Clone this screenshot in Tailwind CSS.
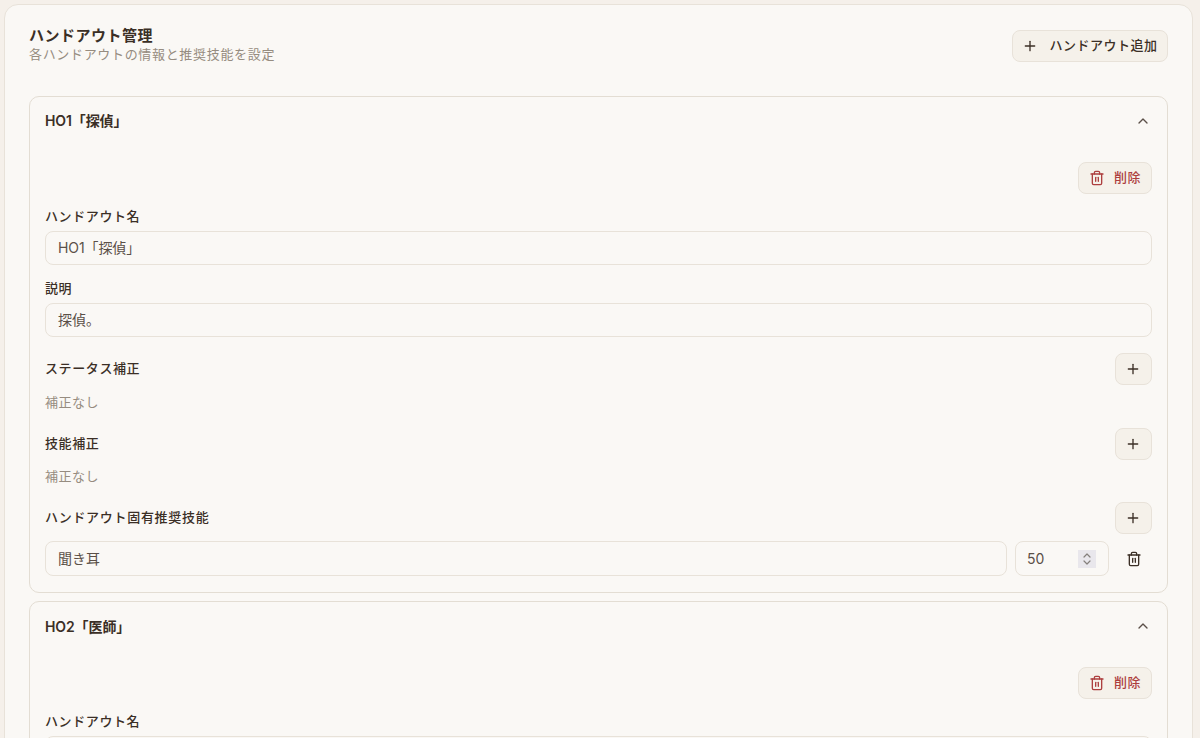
<!DOCTYPE html>
<html lang="ja">
<head>
    <meta charset="UTF-8">
    <meta name="viewport" content="width=device-width, initial-scale=1.0">
    <title>ハンドアウト管理</title>
    <script src="https://cdn.jsdelivr.net/npm/@tailwindcss/browser@4"></script>
</head>
<body class="bg-[#f5f0ea] h-[738px] overflow-hidden font-['Inter','Noto_Sans_CJK_JP',sans-serif] text-[#3b2f26]">
    <div class="ml-[4px] mr-[7px] mt-[4px] bg-[#faf8f5] border border-[#e8e2d9] rounded-[14px] px-6 pt-[25px]">
        <!-- ヘッダー -->
        <div class="flex items-start justify-between mb-[32px]">
            <div class="-mt-[2px]">
                <h2 class="text-[15px] leading-[16px] font-semibold tracking-[0.5px]">ハンドアウト管理</h2>
                <p class="text-[13px] leading-[20px] text-[#968c80] tracking-[0.67px]">各ハンドアウトの情報と推奨技能を設定</p>
            </div>
            <button class="flex items-center justify-center gap-[11px] w-[156px] h-8 bg-[#f5f1ea] border border-[#e8e2d9] rounded-lg text-[13px] tracking-[0.5px] font-medium">
                <svg class="w-4 h-4" viewBox="0 0 24 24" fill="none" stroke="currentColor" stroke-width="2" stroke-linecap="round" stroke-linejoin="round"><path d="M5 12h14"/><path d="M12 5v14"/></svg>
                ハンドアウト追加
            </button>
        </div>

        <!-- HO1 -->
        <section class="bg-[#faf8f5] border border-[#e3ddd3] rounded-[10px] px-[15px] pb-4 mb-2">
            <div class="flex items-center justify-between h-[50px]">
                <h3 class="text-sm font-semibold -mt-[2px] tracking-[-0.1px]">HO1「探偵」</h3>
                <svg class="w-4 h-4 -mt-[2px] mr-[1px] text-[#5b5048]" viewBox="0 0 24 24" fill="none" stroke="currentColor" stroke-width="2" stroke-linecap="round" stroke-linejoin="round"><path d="m18 15-6-6-6 6"/></svg>
            </div>
            <div class="flex justify-end mt-[15px]">
                <button class="flex items-center justify-center gap-[9px] w-[74px] h-8 bg-[#f5f1ea] border border-[#e8e2d9] rounded-lg text-[13px] tracking-[0.5px] font-medium text-[#ad3f3f]">
                    <svg class="w-4 h-4" viewBox="0 0 24 24" fill="none" stroke="currentColor" stroke-width="2" stroke-linecap="round" stroke-linejoin="round"><path d="M3 6h18"/><path d="M19 6v14a2 2 0 0 1-2 2H7a2 2 0 0 1-2-2V6"/><path d="M8 6V4a2 2 0 0 1 2-2h4a2 2 0 0 1 2 2v2"/><path d="M10 11v6"/><path d="M14 11v6"/></svg>
                    削除
                </button>
            </div>
            <label class="block text-[13px] leading-[20px] tracking-[0.6px] font-medium mt-3">ハンドアウト名</label>
            <div class="mt-[5px] h-[34px] flex items-center px-3 border border-[#e8e2d9] rounded-lg text-sm tracking-[-0.1px] text-[#5b5048]">HO1「探偵」</div>
            <label class="block text-[13px] leading-[20px] tracking-[0.6px] font-medium mt-[13px]">説明</label>
            <div class="mt-[5px] h-[34px] flex items-center px-3 border border-[#e8e2d9] rounded-lg text-sm text-[#5b5048]">探偵。</div>

            <div class="flex items-center justify-between mt-4">
                <span class="text-[13px] tracking-[0.6px] font-medium">ステータス補正</span>
                <button class="flex items-center justify-center w-[37px] h-8 pr-[1px] bg-[#f5f1ea] border border-[#e8e2d9] rounded-lg">
                    <svg class="w-4 h-4" viewBox="0 0 24 24" fill="none" stroke="currentColor" stroke-width="2" stroke-linecap="round" stroke-linejoin="round"><path d="M5 12h14"/><path d="M12 5v14"/></svg>
                </button>
            </div>
            <p class="mt-[7px] text-[13px] leading-[20px] tracking-[0.5px] text-[#968c80]">補正なし</p>

            <div class="flex items-center justify-between mt-4">
                <span class="text-[13px] tracking-[0.6px] font-medium -mt-[1px]">技能補正</span>
                <button class="flex items-center justify-center w-[37px] h-8 pr-[1px] bg-[#f5f1ea] border border-[#e8e2d9] rounded-lg">
                    <svg class="w-4 h-4" viewBox="0 0 24 24" fill="none" stroke="currentColor" stroke-width="2" stroke-linecap="round" stroke-linejoin="round"><path d="M5 12h14"/><path d="M12 5v14"/></svg>
                </button>
            </div>
            <p class="mt-[6px] text-[13px] leading-[20px] tracking-[0.5px] text-[#968c80]">補正なし</p>

            <div class="flex items-center justify-between mt-4">
                <span class="text-[13px] tracking-[0.7px] font-medium">ハンドアウト固有推奨技能</span>
                <button class="flex items-center justify-center w-[37px] h-8 pr-[1px] bg-[#f5f1ea] border border-[#e8e2d9] rounded-lg">
                    <svg class="w-4 h-4" viewBox="0 0 24 24" fill="none" stroke="currentColor" stroke-width="2" stroke-linecap="round" stroke-linejoin="round"><path d="M5 12h14"/><path d="M12 5v14"/></svg>
                </button>
            </div>
            <div class="flex items-center gap-2 mt-[7px]">
                <div class="flex-1 h-[35px] flex items-center px-3 border border-[#e8e2d9] rounded-lg text-sm text-[#5b5048]">聞き耳</div>
                <div class="w-[94px] h-[35px] flex items-center justify-between pl-[11px] pr-[12px] border border-[#e8e2d9] rounded-lg text-sm text-[#5b5048]">
                    50
                    <span class="flex items-center justify-center w-[18px] h-[18px] bg-[#e9e7ec] text-[#85807c]">
                        <svg class="w-[12px] h-[16px]" viewBox="0 0 12 16" fill="none" stroke="currentColor" stroke-width="1.2" stroke-linecap="round" stroke-linejoin="round"><path d="M3 6l3-3 3 3"/><path d="M3 10l3 3 3-3"/></svg>
                    </span>
                </div>
                <button class="flex items-center justify-center w-[35px] h-[35px] pr-[2px]">
                    <svg class="w-4 h-4" viewBox="0 0 24 24" fill="none" stroke="currentColor" stroke-width="2" stroke-linecap="round" stroke-linejoin="round"><path d="M3 6h18"/><path d="M19 6v14a2 2 0 0 1-2 2H7a2 2 0 0 1-2-2V6"/><path d="M8 6V4a2 2 0 0 1 2-2h4a2 2 0 0 1 2 2v2"/><path d="M10 11v6"/><path d="M14 11v6"/></svg>
                </button>
            </div>
        </section>

        <!-- HO2 -->
        <section class="bg-[#faf8f5] border border-[#e3ddd3] rounded-[10px] px-[15px] pb-4">
            <div class="flex items-center justify-between h-[50px]">
                <h3 class="text-sm font-semibold tracking-[-0.1px]">HO2「医師」</h3>
                <svg class="w-4 h-4 -mt-[2px] mr-[1px] text-[#5b5048]" viewBox="0 0 24 24" fill="none" stroke="currentColor" stroke-width="2" stroke-linecap="round" stroke-linejoin="round"><path d="m18 15-6-6-6 6"/></svg>
            </div>
            <div class="flex justify-end mt-[15px]">
                <button class="flex items-center justify-center gap-[9px] w-[74px] h-8 bg-[#f5f1ea] border border-[#e8e2d9] rounded-lg text-[13px] tracking-[0.5px] font-medium text-[#ad3f3f]">
                    <svg class="w-4 h-4" viewBox="0 0 24 24" fill="none" stroke="currentColor" stroke-width="2" stroke-linecap="round" stroke-linejoin="round"><path d="M3 6h18"/><path d="M19 6v14a2 2 0 0 1-2 2H7a2 2 0 0 1-2-2V6"/><path d="M8 6V4a2 2 0 0 1 2-2h4a2 2 0 0 1 2 2v2"/><path d="M10 11v6"/><path d="M14 11v6"/></svg>
                    削除
                </button>
            </div>
            <label class="block text-[13px] leading-[20px] tracking-[0.6px] font-medium mt-3">ハンドアウト名</label>
            <div class="mt-[5px] h-[34px] flex items-center px-3 border border-[#e8e2d9] rounded-lg text-sm tracking-[-0.1px] text-[#5b5048]">HO2「医師」</div>
        </section>
    </div>
</body>
</html>
